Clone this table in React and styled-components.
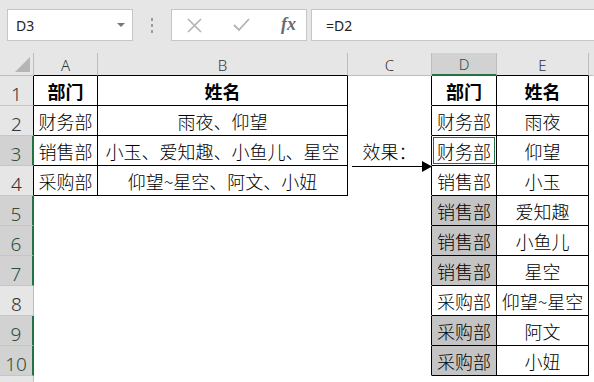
import styled, { createGlobalStyle } from 'styled-components'

const GlobalStyle = createGlobalStyle`
  body {
    margin: 0;
    font-family: "Noto Sans CJK SC", sans-serif;
  }
`

const columns = ['A', 'B', 'C', 'D', 'E']

const source = [
  ['部门', '姓名'],
  ['财务部', '雨夜、仰望'],
  ['销售部', '小玉、爱知趣、小鱼儿、星空'],
  ['采购部', '仰望~星空、阿文、小妞'],
]

const result = [
  ['部门', '姓名'],
  ['财务部', '雨夜'],
  ['财务部', '仰望'],
  ['销售部', '小玉'],
  ['销售部', '爱知趣'],
  ['销售部', '小鱼儿'],
  ['销售部', '星空'],
  ['采购部', '仰望~星空'],
  ['采购部', '阿文'],
  ['采购部', '小妞'],
]

const selectedRows = [3, 5, 6, 7, 9, 10]
const shadedRows = [5, 6, 7, 9, 10]
const rows = [1, 2, 3, 4, 5, 6, 7, 8, 9, 10]

const App = () => {
  return (
    <Window>
      <GlobalStyle />
      <FormulaBar>
        <NameBox>
          D3
          <Caret />
        </NameBox>
        <Grip>
          <span />
          <span />
          <span />
        </Grip>
        <FxBox>
          <svg width="15" height="15" viewBox="0 0 15 15">
            <path d="M1 1 L14 14 M14 1 L1 14" stroke="#b3b3b3" strokeWidth="1.6" fill="none" />
          </svg>
          <svg width="17" height="14" viewBox="0 0 17 14">
            <path d="M1 7 L6 12 L16 1" stroke="#b3b3b3" strokeWidth="1.8" fill="none" />
          </svg>
          <Fx>fx</Fx>
        </FxBox>
        <FormulaInput>=D2</FormulaInput>
      </FormulaBar>

      <Sheet>
        <ColHead>
          <Corner />
        </ColHead>
        {columns.map((c) => (
          <ColHead key={c} $sel={c === 'D'} $edge={c !== 'C'}>
            {c}
          </ColHead>
        ))}
        <ColHead $last />

        {rows.map((r) => {
          const inSource = r <= 4
          return [
            <RowHead key={`h${r}`} $sel={selectedRows.includes(r)} $edge={inSource}>
              {r}
            </RowHead>,
            <Cell key={`a${r}`} $right={inSource} $bottom={inSource} $bold={r === 1}>
              {inSource ? source[r - 1][0] : ''}
            </Cell>,
            <Cell key={`b${r}`} $right={inSource} $bottom={inSource} $bold={r === 1}>
              {inSource ? source[r - 1][1] : ''}
            </Cell>,
            <Cell key={`c${r}`} $right>
              {r === 3 ? '效果：' : ''}
            </Cell>,
            <Cell
              key={`d${r}`}
              $right
              $bottom
              $bold={r === 1}
              $shade={shadedRows.includes(r)}
              $active={r === 3}
            >
              {result[r - 1][0]}
            </Cell>,
            <Cell key={`e${r}`} $right $bottom $bold={r === 1}>
              {result[r - 1][1]}
            </Cell>,
            <Cell key={`f${r}`} />,
          ]
        })}

        <RowHead $tail />
        {columns.map((c) => (
          <Cell key={`t${c}`} />
        ))}
        <Cell />

        <Arrow width="86" height="16" viewBox="0 0 86 16">
          <line x1="2" y1="8.5" x2="74" y2="8.5" stroke="#000" strokeWidth="1" />
          <polygon points="72,3 82,8.5 72,14" fill="#000" />
        </Arrow>
      </Sheet>
    </Window>
  )
}

const Window = styled.div`
  width: 594px;
  height: 382px;
  overflow: hidden;
  background: #e6e6e6;
`

const FormulaBar = styled.div`
  height: 53px;
  box-sizing: border-box;
  padding: 9px 0 0 7px;
  display: flex;
  align-items: flex-start;
  font-family: "Noto Sans", sans-serif;
  font-size: 14px;
  color: #222;
`

const Box = styled.div`
  box-sizing: border-box;
  height: 32px;
  background: #fff;
  border: 1px solid #c6c6c6;
  display: flex;
  align-items: center;
`

const NameBox = styled(Box)`
  width: 126px;
  padding: 0 7px 0 8px;
  justify-content: space-between;
`

const Caret = styled.div`
  width: 0;
  height: 0;
  border-left: 4px solid transparent;
  border-right: 4px solid transparent;
  border-top: 4px solid #777;
`

const Grip = styled.div`
  width: 38px;
  height: 32px;
  display: flex;
  flex-direction: column;
  align-items: center;
  justify-content: center;
  gap: 3px;

  span {
    width: 2px;
    height: 3px;
    background: #9a9a9a;
  }
`

const FxBox = styled(Box)`
  width: 136px;
  padding: 0 10px 0 15px;
  justify-content: space-between;
`

const Fx = styled.span`
  font-family: "Liberation Serif", serif;
  font-style: italic;
  font-weight: 700;
  font-size: 18px;
  color: #6a6a6a;
  padding-bottom: 2px;
`

const FormulaInput = styled(Box)`
  flex: 1;
  margin-left: 4px;
  padding-left: 14px;
  border-right: none;
`

const Sheet = styled.div`
  position: relative;
  height: 329px;
  display: grid;
  grid-template-columns: 34px 64px 250px 84px 65px 92px 1fr;
  grid-template-rows: 23px repeat(10, 30px) 1fr;
`

const ColHead = styled.div`
  box-sizing: border-box;
  display: flex;
  align-items: center;
  justify-content: center;
  background: ${(p) => (p.$sel ? '#d2d2d2' : '#e6e6e6')};
  border-right: 1px solid ${(p) => (p.$last ? 'transparent' : '#bdbdbd')};
  border-bottom: ${(p) =>
    p.$sel ? '2px solid #217346' : `1px solid ${p.$edge ? '#000' : '#bdbdbd'}`};
  font-family: "Noto Sans", sans-serif;
  font-weight: 300;
  font-size: 15px;
  color: ${(p) => (p.$sel ? '#2f4f3c' : '#333')};
  padding-top: 1px;
`

const Corner = styled.div`
  align-self: flex-end;
  margin: 0 0 3px 12px;
  width: 0;
  height: 0;
  border-left: 15px solid transparent;
  border-bottom: 15px solid #b5b5b5;
`

const RowHead = styled.div`
  box-sizing: border-box;
  display: flex;
  align-items: flex-end;
  justify-content: center;
  background: ${(p) => (p.$sel ? '#d2d2d2' : '#e6e6e6')};
  border-bottom: 1px solid ${(p) => (p.$tail ? 'transparent' : '#c6c6c6')};
  border-right: ${(p) =>
    p.$sel ? '2px solid #217346' : `1px solid ${p.$edge ? '#000' : '#bdbdbd'}`};
  font-family: "Noto Sans", sans-serif;
  font-weight: 300;
  font-size: 19px;
  line-height: 22px;
  color: ${(p) => (p.$sel ? '#2f4f3c' : '#333')};
`

const Cell = styled.div`
  box-sizing: border-box;
  display: flex;
  align-items: center;
  justify-content: center;
  white-space: nowrap;
  background: ${(p) => (p.$shade ? '#c4c4c4' : '#fff')};
  border-right: 1px solid ${(p) => (p.$right ? '#000' : 'transparent')};
  border-bottom: 1px solid ${(p) => (p.$bottom ? '#000' : 'transparent')};
  font-size: 18px;
  font-weight: ${(p) => (p.$bold ? 600 : 300)};
  color: #000;
  ${(p) => p.$active && 'box-shadow: inset 0 0 0 1px #fff, inset 0 0 0 2px #217346;'}
`

const Arrow = styled.svg`
  position: absolute;
  left: 350px;
  top: 105px;
`

export default App
